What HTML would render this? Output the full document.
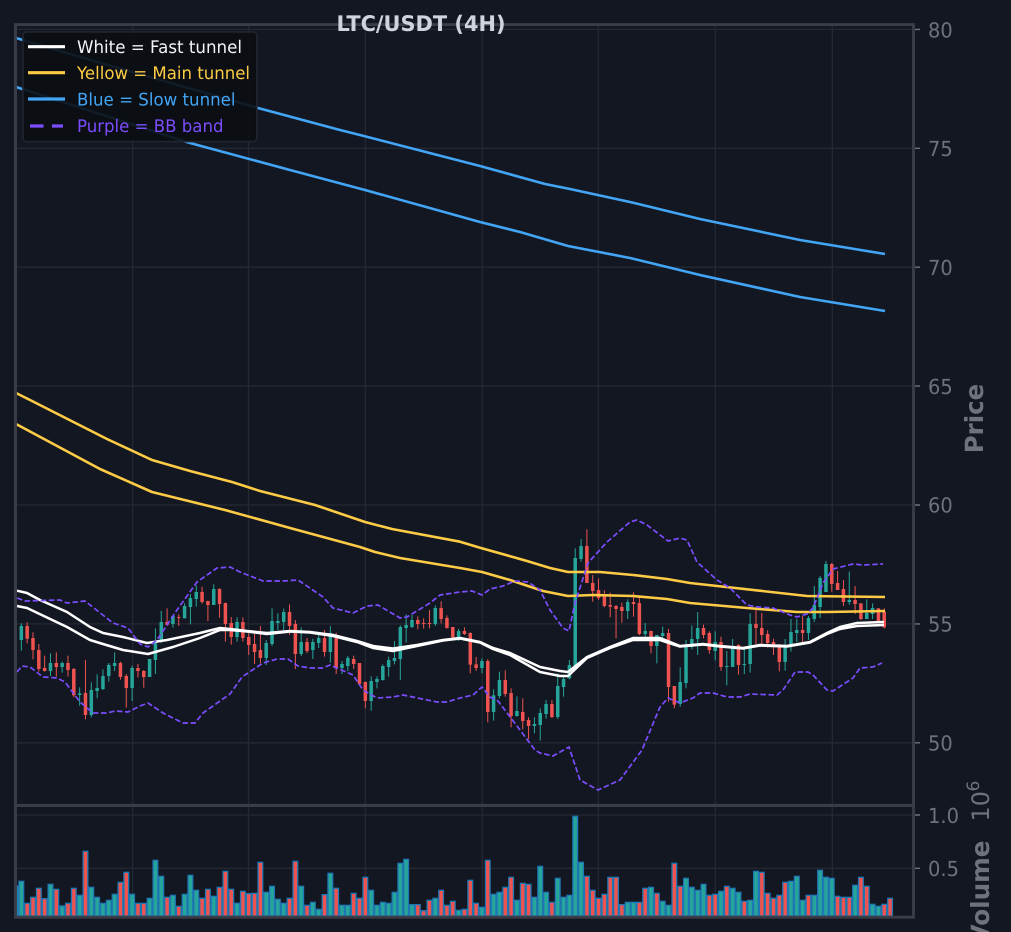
<!DOCTYPE html>
<html><head><meta charset="utf-8"><title>LTC/USDT (4H)</title>
<style>
html,body{margin:0;padding:0;background:#131722;width:1011px;height:932px;overflow:hidden}
svg{display:block;font-family:"DejaVu Sans","Liberation Sans",sans-serif;text-rendering:geometricPrecision}
.t{fill:#6f727b;font-size:20.8px}
.b{fill:#6f727b;font-size:25px;font-weight:700}
.l{font-size:17.4px}
</style></head><body>
<svg id="s" width="1011" height="932" viewBox="0 0 1011 932" xmlns="http://www.w3.org/2000/svg">
<defs><clipPath id="vc"><rect x="16" y="806" width="897" height="110"/></clipPath></defs>
<rect width="1011" height="932" fill="#131722"/>
<g stroke="#242833" stroke-width="1.3" fill="none">
<path d="M16 29.4H913M16 148.3H913M16 267.2H913M16 386.1H913M16 505H913M16 623.9H913M16 742.8H913M16 815H913M16 868.3H913"/>
<path d="M132.7 25V916M248.5 25V916M365.3 25V916M482.3 25V916M598.3 25V916M715.3 25V916M832.3 25V916"/>
</g>
<g id="candles"></g>
<g id="vol" clip-path="url(#vc)"></g>
<g fill="none" stroke-linejoin="round" stroke-linecap="butt">
<polyline stroke="#42a5f5" stroke-width="2.6" points="16,38 100,62.7 258,108 340,130 360,135 480,166 545,184 570,189 630,202 700,219 800,240 885,254"/>
<polyline stroke="#42a5f5" stroke-width="2.6" points="16,87 190,143 290,170 365,190 480,222 520,232 568,246 630,258 700,275 800,297 885,311"/>
<polyline stroke="#fdcb45" stroke-width="2.6" points="16,393 32,401 107,439 152,460 190,471 232,482 260,491 315,505 365,522 392,529 460,541.7 480,547.7 527,561 550,568 568,572 600,572 633,575 667,579 690,583 807,596 885,597"/>
<polyline stroke="#fdcb45" stroke-width="2.6" points="16,424 100,469 152,492 225,510 290,528 360,547 375,552 400,558 460,568 482,572 510,580 543,591 568,596 593,595 633,596 667,599 690,603 747,608 797,612 827,612 885,611"/>
<polyline stroke="#ffffff" stroke-width="2.5" points="17,590.7 27,593 40,600 67,612 90,627 103,633 123,637 147,643 167,640 200,633 220,628 230,629 247,631 267,633 290,631 310,632 333,635 357,641 373,646 393,648.5 417,645 443,640 460,638 480,642 493,648 510,653 540,667 560,671 568,672 587,657 610,647 633,638 660,638 680,646 703,644 720,646 743,648 760,645 787,646 810,642 827,633 840,627 857,623 884,622"/>
<polyline stroke="#ffffff" stroke-width="2.5" points="17,606 27,608 67,627 90,640 103,644 123,650 148,654 173,647 200,638 220,630 230,630 247,631.5 267,634 290,631.5 310,632.5 333,636 357,642 373,648 393,651 417,646 443,640.5 460,638.5 480,642.5 493,649 510,655 540,672 560,676 568,676 587,658 610,648 633,640 660,640 680,646.5 703,644.5 720,646.5 743,648.5 760,645.5 787,646.5 810,642.5 827,634 840,629 857,626 884,625"/>
<polyline stroke="#7c4dff" stroke-width="1.7" stroke-dasharray="5.5 2.6" points="17,598 25,601 60,600 67,603 85,601 113,623 128,628 140,644 148,647 157,640 177,610 197,582 210,573 217,568 230,567 240,572 263,581 283,581 298,580 323,597 333,608 353,613 367,606 378,605 400,618 407,617 430,603 440,595 460,592 472,591 482,595 490,589 503,586 515,581 528,582 540,590 550,610 563,628 569,631 575,603 588,563 607,542 630,522 637,520 647,525 668,541 680,538 687,540 697,562 717,580 730,588 747,605 757,607 773,608 790,615 797,617 807,614 813,608 823,583 833,569 853,564 863,565 883,564"/>
<polyline stroke="#7c4dff" stroke-width="1.7" stroke-dasharray="5.5 2.6" points="17,672 22,666 30,667 43,677 57,678 65,682 80,702 93,713 107,713 115,711 128,712 140,706 148,703 163,713 183,723 195,723 203,713 230,694 242,677 263,663 277,659 288,659 298,666 310,668 323,668 330,665 353,675 363,690 377,698 393,697 403,695 437,702 447,702 460,698 473,695 482,687 490,697 498,701 520,730 535,750 540,753 553,756 569,747 580,780 598,790 620,780 642,750 660,707 668,698 680,703 693,698 700,693 713,693 727,697 740,697 750,694 777,695 783,690 795,672 808,672 813,675 827,690 833,691 853,678 860,668 873,667 882,663"/>
</g>
<g fill="none" stroke="#3a3d47" stroke-width="2.9">
<rect x="15.5" y="24.6" width="898" height="780.8"/>
<rect x="15.5" y="805.4" width="898" height="111.8"/>
</g>
<path d="M915 29.4h5M915 148.3h5M915 267.2h5M915 386.1h5M915 505h5M915 623.9h5M915 742.8h5M915 815h5M915 868.3h5" stroke="#6f727b" stroke-width="1.4"/>
<g class="t">
<text x="928" y="37.500" textLength="24.7" lengthAdjust="spacingAndGlyphs">80</text>
<text x="928" y="156" textLength="24.7" lengthAdjust="spacingAndGlyphs">75</text>
<text x="928" y="275" textLength="24.7" lengthAdjust="spacingAndGlyphs">70</text>
<text x="928" y="394" textLength="24.7" lengthAdjust="spacingAndGlyphs">65</text>
<text x="928" y="512.500" textLength="24.7" lengthAdjust="spacingAndGlyphs">60</text>
<text x="928" y="631.500" textLength="24.7" lengthAdjust="spacingAndGlyphs">55</text>
<text x="928" y="750.500" textLength="24.7" lengthAdjust="spacingAndGlyphs">50</text>
<text x="928" y="823" textLength="31" lengthAdjust="spacingAndGlyphs">1.0</text>
<text x="928" y="876" textLength="31" lengthAdjust="spacingAndGlyphs">0.5</text>
</g>
<text class="b" transform="translate(983,418.500) rotate(-90)" text-anchor="middle" textLength="69.500" lengthAdjust="spacingAndGlyphs">Price</text>
<text class="b" transform="translate(989,892) rotate(-90)" text-anchor="middle" textLength="103" lengthAdjust="spacingAndGlyphs">Volume</text>
<text class="t" style="font-size:24px" transform="translate(989,821.500) rotate(-90)" textLength="30.500" lengthAdjust="spacingAndGlyphs">10</text>
<text class="t" style="font-size:17px" transform="translate(979,791.500) rotate(-90)">6</text>
<text x="421" y="31" text-anchor="middle" fill="#d1d4dc" font-size="21.500" font-weight="700" textLength="169" lengthAdjust="spacingAndGlyphs">LTC/USDT (4H)</text>
<rect x="23" y="32" width="233.8" height="109.6" rx="3.5" fill="#0b0d12" fill-opacity=".9" stroke="#22252f" stroke-width="1.6"/>
<g stroke-width="3.2" fill="none">
<path d="M28 46.7H65" stroke="#ffffff"/>
<path d="M28 72.7H65" stroke="#fdcb45"/>
<path d="M28 99H65" stroke="#42a5f5"/>
<path d="M30 126H43.500M52 126H63" stroke="#7c4dff"/>
</g>
<g class="l">
<text x="77" y="53" fill="#f2f3f5" textLength="165" lengthAdjust="spacingAndGlyphs">White = Fast tunnel</text>
<text x="77" y="79" fill="#fdcb45" textLength="173" lengthAdjust="spacingAndGlyphs">Yellow = Main tunnel</text>
<text x="77" y="105.500" fill="#42a5f5" textLength="158.500" lengthAdjust="spacingAndGlyphs">Blue = Slow tunnel</text>
<text x="77" y="132" fill="#7c4dff" textLength="146.500" lengthAdjust="spacingAndGlyphs">Purple = BB band</text>
</g>
</svg>
<script>
var NS="http://www.w3.org/2000/svg";
var G="#26a69a",R="#ef5350";
function X(i){return 15.5+5.8305*i}
function el(p,n,a){var e=document.createElementNS(NS,n);for(var k in a)e.setAttribute(k,a[k]);p.appendChild(e)}
var cg=document.getElementById("candles"),vg=document.getElementById("vol");
var idx=1;
function seg(off,s){s.trim().split(/\s+/).forEach(function(c){
 var col=c[0]=="G"?G:R,p=c.slice(1).split(",").map(function(v){return off+v/3}),x=X(idx++);
 el(cg,"line",{x1:x,x2:x,y1:p[0],y2:p[3],stroke:col,"stroke-width":1});
 el(cg,"rect",{x:x-1.75,y:p[1],width:3.5,height:Math.max(p[2]-p[1],1),fill:col});
})}
seg(560,"G190,198,240,272 R187,198,236,250 R217,234,270,298 R252,270,327,335 R287,324,333,335 G280,309,333,348 R277,309,321,350 G305,309,321,338 R287,309,330,350 R324,327,406,412 G382,400,405,437 R300,399,465,478 G367,390,465,472 G343,384,393,415 G328,348,387,390 G309,315,348,365 G277,309,318,333 R305,309,351,359 R342,348,384,443 G317,324,384,423 R312,324,333,352 R330,333,351,383 G297,297,351,351 G205,250,300,342 G153,186,243,250 R145,186,195,198 G168,168,192,203 R163,171,173,198 G130,138,175,175 G102,114,141,193 G76,96,117,140 R80,96,126,131 R122,123,135,183 G73,87,135,135 R85,87,132,173 R128,129,192,245");
seg(560,"R171,189,231,254 G172,186,231,245 R172,186,234,245 R218,231,255,285 R222,252,276,312 R198,270,294,310 G240,249,294,315 G145,183,252,258 G160,183,189,210 G146,156,186,210 R133,156,198,225 R180,192,282,327 G202,246,282,288 R234,246,273,279 G236,246,270,297 G225,234,249,264 R210,234,276,290 G198,219,276,308 R218,234,325,342 G303,312,324,342 G288,294,318,333 R287,297,312,327 R309,309,372,373 R365,366,423,445 G349,363,423,452 G349,357,366,385 G313,318,360,362 G290,300,321,350 G243,294,303,313 G196,201,297,360 G163,195,204,248 G165,180,201,204 R169,180,192,208 R175,189,191,206 R150,189,191,205 G136,144,192,198 R124,144,177,190 R166,174,204,206 R201,201,232,235 G207,213,232,243");
seg(520,"R322,333,342,345 R337,339,434,460 R411,433,444,453 G415,423,444,460 R418,423,576,607 G508,526,576,602 G455,480,528,535 R451,480,522,530 R505,519,588,622 G529,573,588,590 R535,576,603,628 R592,600,618,658 G592,612,618,640 G565,579,615,662 G540,552,582,596 R540,552,591,594 G460,498,591,597 G465,477,501,530 G420,435,475,478 G85,114,440,440 G57,78,117,125 R28,78,189,155 R165,189,213,245 R176,210,234,240 R211,225,258,262 R218,255,260,292 R255,258,267,355 R248,261,273,308 G238,246,273,297 R217,246,252,290 R232,249,342,345 G309,333,342,352 R332,333,378,400 G345,345,378,430 G320,339,348,365 R327,339,501,545 R498,498,554,565 G442,486,552,560 G360,378,489,505");
seg(540,"G256,297,321,328 G216,264,297,345 R254,264,285,295 R274,279,330,341 G274,306,333,361 R290,306,381,392 G333,378,381,436 G297,324,381,381 R312,315,375,404 G320,372,375,402 G220,252,372,398 R210,252,264,312 R219,264,285,315 R271,282,309,323 R296,306,315,345 R312,315,366,394 G297,315,366,392 G237,276,318,335 G237,270,279,306 R228,270,279,306 G228,234,279,300 G138,195,237,246 G108,114,201,234 G63,72,156,156 R69,72,132,155 R93,129,150,150 R120,147,186,198 G95,180,186,194 R138,180,192,222 R190,190,237,240 G178,219,237,237 G190,204,222,237 R205,205,244,244 R205,215,262,265");
var vi=0;
function vol(off,s){s.trim().split(/\s+/).forEach(function(c){
 var col=c[0]=="G"?G:R,y=off+(+c.slice(1))/3,x=X(vi++);
 el(vg,"rect",{x:x-2.35,y:y,width:4.7,height:916-y,fill:col,stroke:"#1f77b4","stroke-width":1.3});
})}
vol(800,"G258 G244 R310 R292 R265 R296 G253 R268 G318 R310 R265 G286 R154 G262 G292 G310 G301 G283 R247 R217 G283 R310 R310 G295 G181 G229 R292 G286 R319 G283 G226 G271 R295 R268 G289 R262 R214 R268 G310 R274 R281 R280 R187 G277 G259 G298 G310 R295 R184 G259 R316 G307 G328 R284 G220 R265");
vol(800,"G316 G316 R280 R295 R232 G271 G316 G307 G310 G277 G190 G178 G314 R314 R332 R301 G295 R271 R316 R304 G331 R328 R241 R310 G322 R181 G283 G277 R262 R232 G301 R250 R253 G292 G199 G277 R307 G235 G292 G286 G49 G187 R229 R271 R295 R283 R232 R232 R314 G307 G307 R307 R265 G262 R280 G304 G316 R190 R259 G235");
vol(770,"G352 G361 G343 R376 R373 G364 R349 G355 G367 R394 G391 G304 R307 R370 R385 R376 R337 G334 G319 G391 R376 G376 G301 G322 G325 R379 R382 R382 G346 R322 R349 G403 G409 R403 R385");
</script>
</body></html>
